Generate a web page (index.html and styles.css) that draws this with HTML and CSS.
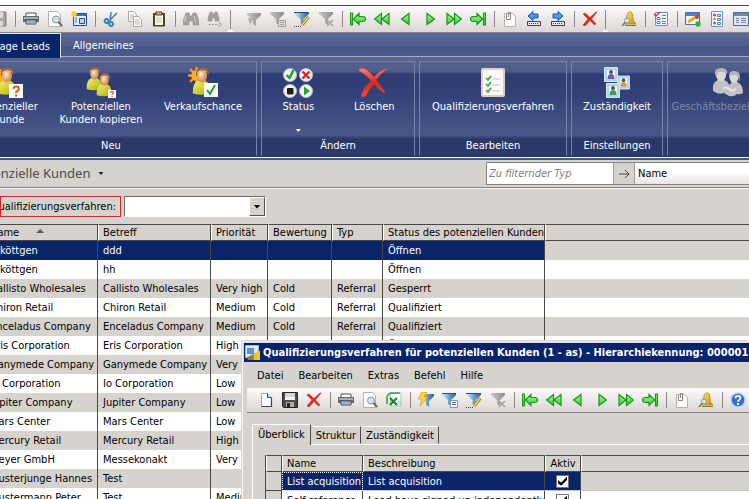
FILE: index.html
```
<!DOCTYPE html>
<html lang="de">
<head>
<meta charset="utf-8">
<title>Potenzielle Kunden</title>
<link rel="stylesheet" href="styles.css">
</head>
<body>
<svg class="defs" aria-hidden="true">
  <defs>
    <linearGradient id="gold" x1="0" y1="0" x2="1" y2="1"><stop offset="0" stop-color="#fff27a"/><stop offset="1" stop-color="#c98a00"/></linearGradient>
    <linearGradient id="leaf" x1="0" y1="0" x2="0" y2="1"><stop offset="0" stop-color="#a8f79c"/><stop offset="1" stop-color="#2fd02a"/></linearGradient>
    <linearGradient id="steel" x1="0" y1="0" x2="1" y2="0"><stop offset="0" stop-color="#dff0fb"/><stop offset=".5" stop-color="#6da3cf"/><stop offset="1" stop-color="#2b5c8c"/></linearGradient>
    <linearGradient id="ash" x1="0" y1="0" x2="1" y2="0"><stop offset="0" stop-color="#c9c7c5"/><stop offset="1" stop-color="#8f8d8b"/></linearGradient>
    <radialGradient id="skin" cx=".4" cy=".4"><stop offset="0" stop-color="#ffe6cc"/><stop offset="1" stop-color="#d9925c"/></radialGradient>
    <linearGradient id="shirt" x1="0" y1="0" x2="1" y2="1"><stop offset="0" stop-color="#f7f26a"/><stop offset="1" stop-color="#a9ae10"/></linearGradient>
    <linearGradient id="ruby" x1="0" y1="0" x2="0" y2="1"><stop offset="0" stop-color="#ff8a78"/><stop offset=".5" stop-color="#e0261b"/><stop offset="1" stop-color="#f04a3c"/></linearGradient>
  </defs>
  <symbol id="i-disk" viewBox="0 0 16 16"><path d="M1 1h14v14H2l-1-1z" fill="#a8a6a4" stroke="#7d7b79"/><path d="M4 1h8v6H4zM4 10h8v5H4z" fill="#dcdad8"/></symbol>
  <symbol id="i-save" viewBox="0 0 16 16"><path d="M.5.5h15v15h-14l-1-1z" fill="#4c4c4c" stroke="#222"/><path d="M3 1h10v7H3z" fill="#f4f4f4"/><path d="M3 2h10M3 4h10" stroke="#b8b8b8"/><path d="M4 10h8v5H4z" fill="#aaa"/><path d="M5 11h3v4H5z" fill="#222"/></symbol>
  <symbol id="i-print" viewBox="0 0 16 16"><path d="M3 2h10v4H3z" fill="#fff" stroke="#555"/><path d="M0 5h16v6H0z" fill="#666b70"/><path d="M1 6h14v2H1z" fill="#a9aeb3"/><path d="M3 9h10v4H3z" fill="#dceaf8" stroke="#444"/><path d="M4 11h8" stroke="#3c78b4"/></symbol>
  <symbol id="i-preview" viewBox="0 0 16 16"><path d="M1.500.500h9l3 3v12h-12z" fill="#fff" stroke="#b5b2af"/><circle cx="9" cy="8.500" r="3.500" fill="#cfe4f2" stroke="#8a9096"/><path d="M11.500 11l3.500 4" stroke="#6b6259" stroke-width="2"/></symbol>
  <symbol id="i-window" viewBox="0 0 16 16"><path d="M2.500 2.500h13v12h-13z" fill="#e5effb" stroke="#1e4fa0"/><path d="M3 3h12v2H3z" fill="#3a72cc"/><path d="M4 7h2M4 9h2M4 11h2" stroke="#3a72cc"/><path d="M8.500 7.500h5v5h-5z" fill="#b9d3f2" stroke="#1e4fa0"/><path d="M0 3h6M3 0v6M1 1l4 4M5 1L1 5" stroke="#f3d613" stroke-width="1.500"/></symbol>
  <symbol id="i-cut" viewBox="0 0 16 16"><path d="M7 10L8 1M7 9l7-7" stroke="#5c86a8" stroke-width="1.700"/><circle cx="3.500" cy="10" r="2" fill="none" stroke="#1b86c8" stroke-width="1.800"/><circle cx="8" cy="13" r="2" fill="none" stroke="#1b86c8" stroke-width="1.800"/></symbol>
  <symbol id="i-copy" viewBox="0 0 16 16"><path d="M1.500.500h5l3 3v7h-8z" fill="#fdfdfd" stroke="#aaa7a4"/><path d="M3 4h4M3 6h4M3 8h3" stroke="#bcbab7"/><path d="M6.500 5.500h5l3 3v7h-8z" fill="#fdfdfd" stroke="#aaa7a4"/><path d="M8 9h4M8 11h5M8 13h5" stroke="#bcbab7"/></symbol>
  <symbol id="i-paste" viewBox="0 0 16 16"><path d="M2 2h12v13.500H2z" fill="#4d4226"/><path d="M4 4h8v10H4z" fill="#f7f5ee"/><path d="M5 1h6v3H5z" fill="#c7b789" stroke="#4d4226"/><path d="M5 7h6M5 9h6M5 11h6" stroke="#c8c6c0"/></symbol>
  <symbol id="i-find" viewBox="0 0 16 16"><path d="M3 2h3l1 3h2l1-3h3l3 8v4h-6v-4H6v4H0v-4z" fill="#a3a09d" stroke="#8f8c89" stroke-width=".5"/><path d="M3 5l-1.500 6M11 5l1.500 6" stroke="#d6d3d0"/></symbol>
  <symbol id="i-findnext" viewBox="0 0 16 16"><path d="M3 1h2l1 2h1l1-2h2l2 6v3H8V7H5v3H1V7z" fill="#a3a09d" stroke="#8f8c89" stroke-width=".5"/><path d="M2 13.500h10" stroke="#9a9794" stroke-dasharray="2 1"/><path d="M11.500 11l3 2.500-3 2.500" fill="none" stroke="#9a9794"/></symbol>
  <symbol id="i-funnel-off" viewBox="0 0 16 16"><path d="M1 2h14v2l-5 5v6l-3-2V9L1 4z" fill="url(#ash)"/><path d="M2 7h6l-4 7z" fill="#b3b1ae"/></symbol>
  <symbol id="i-funnel-form-off" viewBox="0 0 16 16"><path d="M0 1h14v2L9 8v6l-3-2V8L0 3z" fill="url(#ash)"/><path d="M8.500 9.500h7v6h-7z" fill="#dddbd8" stroke="#a3a19e"/><path d="M10 11.500h4M10 13.500h4" stroke="#a3a19e"/></symbol>
  <symbol id="i-funnel-x-off" viewBox="0 0 16 16"><path d="M1 1h14v2l-5 5v6l-3-2V8L1 3z" fill="url(#ash)"/><path d="M9 9l6 6M15 9l-6 6" stroke="#a3a19e" stroke-width="1.600"/></symbol>
  <symbol id="i-funnel-pen" viewBox="0 0 16 16"><path d="M0 1h15v2L9.500 8v6l-3-2V8L0 3z" fill="url(#steel)"/><path d="M0 1.500h15" stroke="#294f78"/><path d="M8 14l6.500-8" stroke="#a46b14" stroke-width="3"/><path d="M8 14l6.500-8" stroke="#ffd45b" stroke-width="1.400"/><path d="M0 15.500h7" stroke="#444" stroke-dasharray="1 1"/></symbol>
  <symbol id="i-funnel-form" viewBox="0 0 16 16"><path d="M0 1h14v2L9 8v6l-3-2V8L0 3z" fill="url(#steel)"/><path d="M0 1.500h14" stroke="#294f78"/><path d="M8.500 8.500h7v7h-7z" fill="#fff" stroke="#7f97b5"/><path d="M10 10.500h4M10 12.500h4" stroke="#456fa5"/></symbol>
  <symbol id="i-funnel-flash" viewBox="0 0 16 16"><path d="M2 2h14v2l-5 5v6l-3-2V9L2 4z" fill="url(#steel)"/><path d="M4 0h5L6 5h4l-8 9 2-7H0z" fill="#ffd72e" stroke="#d19800" stroke-width=".7"/></symbol>
  <symbol id="i-first" viewBox="0 0 16 16"><path d="M.500 2h2v12h-2zM3.500 8L9 2.500v3h3.500q3 0 3 2.500t-3 2.500H9v3z" fill="url(#leaf)" stroke="#18961a" stroke-width="1.200"/></symbol>
  <symbol id="i-back2" viewBox="0 0 16 16"><path d="M.700 8L7.500 2.500v11zM8 8l7-5.500v11z" fill="url(#leaf)" stroke="#18961a" stroke-width="1.200"/></symbol>
  <symbol id="i-back" viewBox="0 0 16 16"><path d="M3.500 8l7.500-5.500v11z" fill="url(#leaf)" stroke="#18961a" stroke-width="1.200"/></symbol>
  <symbol id="i-next" viewBox="0 0 16 16"><path d="M12.500 8L5 2.500v11z" fill="url(#leaf)" stroke="#18961a" stroke-width="1.200"/></symbol>
  <symbol id="i-next2" viewBox="0 0 16 16"><path d="M8 8L1 2.500v11zM15.300 8L8.500 2.500v11z" fill="url(#leaf)" stroke="#18961a" stroke-width="1.200"/></symbol>
  <symbol id="i-last" viewBox="0 0 16 16"><path d="M15.500 2h-2v12h2zM12.500 8L7 2.500v3H3.500q-3 0-3 2.500t3 2.500H7v3z" fill="url(#leaf)" stroke="#18961a" stroke-width="1.200"/></symbol>
  <symbol id="i-clip" viewBox="0 0 16 16"><path d="M2.500 2.500h8l3 3v10h-11z" fill="#fbfbfb" stroke="#b5b2af"/><path d="M4.500 3v5.500h4V1.500h-2V6" fill="none" stroke="#8a8784"/></symbol>
  <symbol id="i-in" viewBox="0 0 16 16"><path d="M2 5l5-4.500V3h5v4H7v2.500z" fill="#4d9ae8" stroke="#1a56a5"/><path d="M1.500 10.500h13v4h-13z" fill="#e6e9ec" stroke="#39444f"/><path d="M3 12.500h10" stroke="#39444f" stroke-dasharray="1 1"/></symbol>
  <symbol id="i-out" viewBox="0 0 16 16"><path d="M13 5L8 .500V3H3v4h5v2.500z" fill="#4d9ae8" stroke="#1a56a5"/><path d="M1.500 10.500h13v4h-13z" fill="#e6e9ec" stroke="#39444f"/><path d="M3 12.500h10" stroke="#39444f" stroke-dasharray="1 1"/></symbol>
  <symbol id="i-del" viewBox="0 0 16 16"><path d="M1 3l2-1 5 4.500L14 1h1L9.500 8l4.500 5-1.500 1L8 9.500 3 15l-2-1 5-6z" fill="#df2c1e" stroke="#b01a10" stroke-width=".5"/></symbol>
  <symbol id="i-bell" viewBox="0 0 16 16"><path d="M8 1q3-1 3.500 3l1 6 2.500 3H3l2-3 1-6q.500-2 2-3z" fill="url(#gold)" stroke="#b08a18" stroke-width=".8"/><path d="M4 14.500h11" stroke="#8c6f28"/><circle cx="6" cy="9.500" r="2.500" fill="#e4f1fa" fill-opacity=".8" stroke="#8c989f"/><path d="M4 11.500l-3 3.500" stroke="#77706a" stroke-width="1.300"/></symbol>
  <symbol id="i-list" viewBox="0 0 16 16"><path d="M2.500 1.500h12v13h-12z" fill="#f5f9ff" stroke="#6f94c4"/><path d="M9 4.500h4M9 7.500h4M9 10.500h4M9 12.500h4" stroke="#5b7fb4"/><path d="M1 3l2 2 4-4" fill="none" stroke="#c33a32" stroke-width="1.400"/><path d="M4 6.500h3v2H4zM4 10.500h3v2H4z" fill="#fff" stroke="#5b7fb4"/></symbol>
  <symbol id="i-design" viewBox="0 0 16 16"><path d="M.500 1.500h14v12H.500z" fill="#eef5ff" stroke="#3f6fb5"/><path d="M1 2h13v3H1z" fill="#4d82cc"/><path d="M3 11l8-5" stroke="#e5ad18" stroke-width="3"/><circle cx="13" cy="13" r="2.700" fill="#2fb13a"/><circle cx="12" cy="6" r="2" fill="#d83a30"/></symbol>
  <symbol id="i-props" viewBox="0 0 16 16"><path d="M2.500.500h11v15h-11z" fill="#f7faff" stroke="#7390bd"/><circle cx="5.500" cy="4" r="1.500" fill="#d5443a"/><circle cx="5.500" cy="8" r="1.500" fill="#e39922"/><circle cx="5.500" cy="12" r="1.500" fill="#4774c2"/><path d="M8.500 3.500h3v2h-3zM8.500 7.500h3v2h-3zM8.500 11.500h3v2h-3z" fill="#cfe0f5" stroke="#5b7fb4"/></symbol>
  <symbol id="i-form" viewBox="0 0 16 16"><path d="M.500 1.500h15v13H.500z" fill="#dfe9f6" stroke="#4b6c9c"/><path d="M1 2h14v3H1z" fill="#6787b4"/><path d="M3 7.500h3M3 9.500h3M3 11.500h3M8 7.500h5M8 9.500h5M8 11.500h5" stroke="#6787b4"/></symbol>
  <symbol id="i-new" viewBox="0 0 16 16"><path d="M3.500 1.500h6l4 4v9h-10z" fill="#fff" stroke="#8fa6cf"/><path d="M9.500 1.500v4h4" fill="#bcd0ec" stroke="#32568f"/><path d="M13.500 6v8.500h-10" fill="none" stroke="#24457c" stroke-width="1.200"/></symbol>
  <symbol id="i-excel" viewBox="0 0 16 16"><path d="M4 1h11v13H5z" fill="#fff" stroke="#9ccaa5"/><path d="M1 12V6q0-5 6-5h7" fill="none" stroke="#35a349" stroke-width="1.600"/><path d="M4 6l7 7M11 6l-7 7" stroke="#17802b" stroke-width="2"/><path d="M11 10h4M11 12h4" stroke="#9ccaa5"/></symbol>
  <symbol id="i-help" viewBox="0 0 16 16"><circle cx="8" cy="8" r="7" fill="#2f70d2" stroke="#bcd3f2" stroke-width="1.500"/><path d="M5.500 6.200q0-2.400 2.500-2.400t2.500 2.200q0 1-1.300 1.700T8 9.700" fill="none" stroke="#fff" stroke-width="1.700"/><path d="M7 11h2v2H7z" fill="#fff"/></symbol>
  <symbol id="i-app" viewBox="0 0 16 16"><path d="M.500.500h13v12H.500z" fill="#d9ecf9" stroke="#a8b8c8"/><path d="M2 3h7v6H2z" fill="#5a92cf"/><path d="M6 15v-5l3-1v6z" fill="#4dac46"/><path d="M9 15V8l3-1v8z" fill="#f2c12c"/><path d="M12 15V5l3 1v9z" fill="#d9d04a"/><path d="M2 13l4-3v5H3z" fill="#d35b2e"/></symbol>
  <symbol id="i-person" viewBox="0 0 20 28"><path d="M1 26q-1-10 5-13h7q6 3 5 12-6 4-17 1z" fill="url(#shirt)"/><ellipse cx="10" cy="8" rx="5" ry="7" fill="url(#skin)"/><path d="M4 8Q3 1 10 0q7 0 7 7-4-4-9-3-3 1-3 5z" fill="#a4653a"/><path d="M5 5q4-3 9-1" stroke="#f1d3b8" fill="none"/></symbol>
  <symbol id="i-sun" viewBox="0 0 16 16"><path d="M8 0v16M0 8h16M2 2l12 12M14 2L2 14" stroke="#f79c14" stroke-width="2.200"/><circle cx="8" cy="8" r="5" fill="#ffae24"/></symbol>
  <symbol id="r-lead" viewBox="0 0 34 34"><use href="#i-sun" x="0" y="3" width="17" height="17"/><use href="#i-person" x="5" y="1" width="20" height="29"/><path d="M17 18h14v14H17z" fill="#fff"/><path d="M21.500 23q0-2.600 2.700-2.600T26.800 23q0 1.300-1.400 2t-1.300 2" fill="none" stroke="#e0561e" stroke-width="2"/><path d="M23 28.500h2.200v2H23z" fill="#e0561e"/></symbol>
  <symbol id="r-copy" viewBox="0 0 34 34"><use href="#i-person" x="2" y="1" width="17" height="24"/><use href="#i-person" x="12" y="7" width="17" height="24"/><path d="M24 24h8v8h-8z" fill="#fff"/><path d="M26.500 26.700q0-1.300 1.500-1.300t1.500 1.200q0 .700-.8 1.200t-.7 1" fill="none" stroke="#e0561e" stroke-width="1.200"/><path d="M27.500 30h1.200v1h-1.200z" fill="#e0561e"/></symbol>
  <symbol id="r-sales" viewBox="0 0 34 34"><use href="#i-sun" x="2" y="1" width="17" height="17"/><use href="#i-person" x="6" y="1" width="20" height="29"/><path d="M18 17h14v14H18z" fill="#fff"/><path d="M21 24l3 4 5-9" fill="none" stroke="#22a12a" stroke-width="2"/></symbol>
  <symbol id="r-status" viewBox="0 0 34 34"><g fill="#f1f1f1" stroke="#b9bcc4"><circle cx="9" cy="9" r="6.500"/><circle cx="25" cy="9" r="6.500"/><circle cx="9" cy="25" r="6.500"/><circle cx="25" cy="25" r="6.500"/></g><path d="M5.500 9l3 3 4-8" fill="none" stroke="#1fa02a" stroke-width="2.400"/><path d="M21.500 5.500l7 7M28.500 5.500l-7 7" stroke="#d7281d" stroke-width="2.400"/><rect x="6" y="22" width="6.500" height="6.500" rx="1" fill="#1d1d1d"/><path d="M23 20.500l6 4.500-6 4.500z" fill="#2aa32a"/></symbol>
  <symbol id="r-del" viewBox="0 0 34 34"><path d="M2 3q5-2 8 1 4 3 7 7 6-7 14-9Q24 7 19 14q5 6 9 12l-1 1q-6-4-10-9-5 5-8 12-3 2-5 0 2-8 10-15Q9 8 2 5z" fill="url(#ruby)" stroke="#c3392e" stroke-width=".5"/></symbol>
  <symbol id="r-quali" viewBox="0 0 34 34"><rect x="6" y="3" width="22" height="27" rx="1" fill="#fbfaf6" stroke="#e2cdbf" stroke-width="2"/><path d="M10 12l2 2 3-4M10 18l2 2 3-4M10 24l2 2 3-4" fill="none" stroke="#34a53c" stroke-width="1.600"/><path d="M17 13h7M17 19h7M17 25h7" stroke="#c2c2c2"/></symbol>
  <symbol id="i-card" viewBox="0 0 14 15"><path d="M.5.5h13v14H.5z" fill="#a9d4f2" stroke="#d5ecfb"/><path d="M3 3h8v9H3z" fill="#f3fbff"/><circle cx="7" cy="5" r="2" fill="#734a34"/><path d="M3.500 12q0-5 3.500-5t3.500 5z"/></symbol>
  <symbol id="r-own" viewBox="0 0 34 34"><g fill="#6a5bb0"><use href="#i-card" x="4" y="1" width="14" height="15"/></g><g fill="#cf9a3a"><use href="#i-card" x="17" y="9" width="13" height="15"/></g><g fill="#3c9c4e"><use href="#i-card" x="6" y="17" width="14" height="15"/></g></symbol>
  <symbol id="r-rel" viewBox="0 0 34 34"><path d="M2 25q-1-9 5-11h6q4 1 5 5l3-3h5q6 2 6 11-3 2-6 1-3 3-8 2l-5-3q-6 2-11-2z" fill="#c2c2c4"/><ellipse cx="10" cy="9" rx="5" ry="6.500" fill="#d9d9da"/><path d="M4 9q-1-7 6-7t6 6q-5-3-8-2-2 0-2 5z" fill="#b4b4b8"/><ellipse cx="23" cy="11" rx="4.500" ry="6" fill="#d9d9da"/><path d="M18 11q-1-6 5-6t6 6l-1 5q0-7-4-7-4-1-6 2z" fill="#b4b4b8"/><path d="M12 23q3-3 6 0t7 0" stroke="#e6e6e7" stroke-width="2" fill="none"/></symbol>
</svg>

<div class="app">
  <nav class="toolbar toolbar-main" aria-label="Symbolleiste">
    <button><svg><use href="#i-disk"/></svg></button><i class="sep"></i>
    <button><svg><use href="#i-print"/></svg></button><button><svg><use href="#i-preview"/></svg></button><button><svg><use href="#i-window"/></svg></button><i class="sep"></i>
    <button><svg><use href="#i-cut"/></svg></button><button><svg><use href="#i-copy"/></svg></button><button><svg><use href="#i-paste"/></svg></button><i class="sep"></i>
    <button><svg><use href="#i-find"/></svg></button><button><svg><use href="#i-findnext"/></svg></button><i class="sep sep-end"></i>
    <button><svg><use href="#i-funnel-off"/></svg></button><button><svg><use href="#i-funnel-form-off"/></svg></button><button><svg><use href="#i-funnel-pen"/></svg></button><button><svg><use href="#i-funnel-x-off"/></svg></button><i class="sep"></i>
    <button><svg><use href="#i-first"/></svg></button><button><svg><use href="#i-back2"/></svg></button><button><svg><use href="#i-back"/></svg></button><button><svg><use href="#i-next"/></svg></button><button><svg><use href="#i-next2"/></svg></button><button><svg><use href="#i-last"/></svg></button><i class="sep"></i>
    <button><svg><use href="#i-clip"/></svg></button><button><svg><use href="#i-in"/></svg></button><button><svg><use href="#i-out"/></svg></button><i class="sep"></i>
    <button><svg><use href="#i-del"/></svg></button><i class="sep sep-end"></i>
    <button><svg><use href="#i-bell"/></svg></button><i class="sep"></i>
    <button><svg><use href="#i-list"/></svg></button><i class="sep"></i>
    <button><svg><use href="#i-design"/></svg></button><button><svg><use href="#i-props"/></svg></button><button><svg><use href="#i-form"/></svg></button>
  </nav>

  <div class="ribbon-tabs">
    <button class="ribbon-tab active">Manage Leads</button>
    <button class="ribbon-tab">Allgemeines</button>
  </div>

  <div class="ribbon">
    <section class="group group-new">
      <div class="actions">
        <button class="action"><svg><use href="#r-lead"/></svg>Potenzieller<br>Kunde</button>
        <button class="action"><svg><use href="#r-copy"/></svg>Potenziellen<br>Kunden kopieren</button>
        <button class="action"><svg><use href="#r-sales"/></svg>Verkaufschance</button>
      </div>
      <h2>Neu</h2>
    </section>
    <section class="group group-change">
      <div class="actions">
        <button class="action"><svg><use href="#r-status"/></svg>Status<span class="caret"></span></button>
        <button class="action"><svg><use href="#r-del"/></svg>Löschen</button>
      </div>
      <h2>Ändern</h2>
    </section>
    <section class="group group-edit">
      <div class="actions"><button class="action"><svg><use href="#r-quali"/></svg>Qualifizierungsverfahren</button></div>
      <h2>Bearbeiten</h2>
    </section>
    <section class="group group-settings">
      <div class="actions"><button class="action"><svg><use href="#r-own"/></svg>Zuständigkeit</button></div>
      <h2>Einstellungen</h2>
    </section>
    <section class="group group-relations">
      <div class="actions"><button class="action" disabled><svg><use href="#r-rel"/></svg>Geschäftsbeziehungen</button></div>
    </section>
  </div>

  <header class="viewbar">
    <button class="view-title">Potenzielle Kunden<span class="caret"></span></button>
    <div class="search">
      <input type="text" placeholder="Zu filternder Typ" aria-label="Zu filternder Typ">
      <button class="go" aria-label="Suchen"><svg viewBox="0 0 12 12"><path d="M1 6h10M7 2l4 4-4 4" fill="none" stroke="#444"/></svg></button>
      <select aria-label="Feld"><option>Name</option></select>
    </div>
  </header>

  <div class="filterbar">
    <label for="procedure">Qualifizierungsverfahren:</label>
    <div class="combo">
      <select id="procedure"><option></option></select>
      <span class="drop"></span>
    </div>
  </div>

  <table class="grid leads">
    <colgroup><col class="c-name"><col class="c-subject"><col class="c-priority"><col class="c-rating"><col class="c-type"><col class="c-status"><col></colgroup>
    <thead><tr><th>Name<span class="sort"></span></th><th>Betreff</th><th>Priorität</th><th>Bewertung</th><th>Typ</th><th>Status des potenziellen Kunden</th><th></th></tr></thead>
    <tbody>
      <tr class="selected"><td class="indent">köttgen</td><td>ddd</td><td></td><td></td><td></td><td>Öffnen</td><td></td></tr>
      <tr><td class="indent">köttgen</td><td>hh</td><td></td><td></td><td></td><td>Öffnen</td><td></td></tr>
      <tr><td>Callisto Wholesales</td><td>Callisto Wholesales</td><td>Very high</td><td>Cold</td><td>Referral</td><td>Gesperrt</td><td></td></tr>
      <tr><td>Chiron Retail</td><td>Chiron Retail</td><td>Medium</td><td>Cold</td><td>Referral</td><td>Qualifiziert</td><td></td></tr>
      <tr><td>Enceladus Company</td><td>Enceladus Company</td><td>Medium</td><td>Cold</td><td>Referral</td><td>Qualifiziert</td><td></td></tr>
      <tr><td>Eris Corporation</td><td>Eris Corporation</td><td>High</td><td></td><td></td><td>Öffnen</td><td></td></tr>
      <tr><td>Ganymede Company</td><td>Ganymede Company</td><td>Very</td><td></td><td></td><td></td><td></td></tr>
      <tr><td>Io Corporation</td><td>Io Corporation</td><td>Low</td><td></td><td></td><td></td><td></td></tr>
      <tr><td>Jupiter Company</td><td>Jupiter Company</td><td>Low</td><td></td><td></td><td></td><td></td></tr>
      <tr><td>Mars Center</td><td>Mars Center</td><td>Low</td><td></td><td></td><td></td><td></td></tr>
      <tr><td>Mercury Retail</td><td>Mercury Retail</td><td>High</td><td></td><td></td><td></td><td></td></tr>
      <tr><td>Meyer GmbH</td><td>Messekonakt</td><td>Very</td><td></td><td></td><td></td><td></td></tr>
      <tr><td>Musterjunge Hannes</td><td>Test</td><td></td><td></td><td></td><td></td><td></td></tr>
      <tr><td>Mustermann Peter</td><td>Test</td><td>Medium</td><td></td><td></td><td></td><td></td></tr>
    </tbody>
  </table>

  <section class="dialog" role="dialog" aria-labelledby="dlg-title">
    <header class="titlebar"><svg><use href="#i-app"/></svg><h1 id="dlg-title">Qualifizierungsverfahren für potenziellen Kunden (1 - as) - Hierarchiekennung: 000001</h1></header>
    <nav class="menubar"><button>Datei</button><button>Bearbeiten</button><button>Extras</button><button>Befehl</button><button>Hilfe</button></nav>
    <nav class="toolbar toolbar-dialog" aria-label="Dialog-Symbolleiste">
      <button><svg><use href="#i-new"/></svg></button><button><svg><use href="#i-save"/></svg></button><button><svg><use href="#i-del"/></svg></button><i class="sep"></i>
      <button><svg><use href="#i-print"/></svg></button><button><svg><use href="#i-preview"/></svg></button><button><svg><use href="#i-excel"/></svg></button><i class="sep"></i>
      <button><svg><use href="#i-funnel-flash"/></svg></button><button><svg><use href="#i-funnel-form"/></svg></button><button><svg><use href="#i-funnel-pen"/></svg></button><button><svg><use href="#i-funnel-x-off"/></svg></button><i class="sep"></i>
      <button><svg><use href="#i-first"/></svg></button><button><svg><use href="#i-back2"/></svg></button><button><svg><use href="#i-back"/></svg></button><button><svg><use href="#i-next"/></svg></button><button><svg><use href="#i-next2"/></svg></button><button><svg><use href="#i-last"/></svg></button><i class="sep"></i>
      <button><svg><use href="#i-clip"/></svg></button><button><svg><use href="#i-bell"/></svg></button><i class="sep"></i>
      <button><svg><use href="#i-help"/></svg></button>
    </nav>
    <div class="tabs"><button class="tab active">Überblick</button><button class="tab">Struktur</button><button class="tab">Zuständigkeit</button></div>
    <div class="page">
      <table class="grid procedures">
        <colgroup><col class="c-mark"><col class="c-pname"><col class="c-desc"><col class="c-active"><col></colgroup>
        <thead><tr><th></th><th>Name</th><th>Beschreibung</th><th>Aktiv</th><th></th></tr></thead>
        <tbody>
          <tr class="selected"><td class="mark"></td><td class="focus">List acquisition</td><td>List acquisition</td><td class="check"><input type="checkbox" checked aria-label="Aktiv"></td><td></td></tr>
          <tr class="plain"><td class="mark"></td><td>Self reference</td><td>Lead have signed up independently</td><td class="check"><input type="checkbox" checked aria-label="Aktiv"></td><td></td></tr>
        </tbody>
      </table>
    </div>
  </section>
</div>
</body>
</html>
```

FILE: styles.css
```
* { box-sizing: border-box; }
:root {
  --face: #d6d3ce;
  --navy: #0a246a;
  --font: "DejaVu Sans Condensed", "DejaVu Sans", sans-serif;
}
body { margin: 0; font: 11px/13px var(--font); color: #000; background: #fff; }
button, input, select { font: inherit; color: inherit; border: 0; padding: 0; margin: 0; background: none; border-radius: 0; }
.defs { position: absolute; width: 0; height: 0; }
.app { position: relative; height: 100vh; padding-top: 5px; overflow: hidden; }

/* Toolbars */
.toolbar { display: flex; align-items: center; background: linear-gradient(#fbfafa, #dcd6d4); }
.toolbar button { flex: none; width: 24px; height: 24px; display: grid; place-items: center; }
.toolbar svg { width: 16px; height: 16px; display: block; }
.toolbar-main { height: 28px; margin-left: -13px; border-top: 1px solid #4c4c4c; border-bottom: 1px solid #85858c; }
.sep { flex: none; width: 8px; height: 16px; background: linear-gradient(#8c8884, #8c8884) 4px 0 / 1px 100% no-repeat; }
.sep-end { width: 15px; height: 22px; align-self: flex-end; background-position: 3px 0; }
.sep-end::after { content: ""; display: block; width: 7px; height: 3px; margin-top: 19px; background: #fff; clip-path: polygon(50% 0, 100% 100%, 0 100%); }

/* Ribbon */
.ribbon-tabs { display: flex; height: 23px; background: linear-gradient(#59689a, #515e8d 55%, #46548a 60%, #4d5a8c); color: #fff; }
.ribbon-tab { height: 25px; padding: 0 12px; white-space: nowrap; }
.ribbon-tab.active { width: 97px; margin-left: -36px; padding: 0 10px 0 0; text-align: right; background: var(--navy); border: 1px solid #dfe3f0; border-bottom: 0; position: relative; }
.ribbon { display: flex; gap: 4px; height: 102px; margin-left: -35px; padding: 4px 0 1px; color: #fff; border-top: 1px solid #a4abc8; border-bottom: 1px solid #f4f5f8; background: linear-gradient(#5a6792, #4d5b8a 15px, #2d3c73 17px, #33437a 40px, #4a5788 78px, #2a3868 82px, #2b3a6c); }
.group { flex: none; display: flex; flex-direction: column; justify-content: space-between; border: 1px solid #7582aa; border-bottom-color: #28366a; }
.group-new { width: 292px; }
.group-change { width: 154px; }
.group-edit { width: 148px; }
.group-settings { width: 92px; }
.group-relations { flex: 1; }
.group h2 { margin: 0; font-size: 11px; font-weight: normal; line-height: 18px; text-align: center; }
.actions { display: grid; grid-auto-flow: column; align-items: start; padding-top: 4px; }
.group-new .actions { grid-template-columns: 86px 98px 1fr; }
.group-relations .actions { grid-template-columns: 120px; }
.action { text-align: center; white-space: nowrap; }
.action svg { display: block; width: 34px; height: 34px; margin: 0 auto; }
.action:disabled { color: #8088a4; }
.caret { display: block; width: 5px; height: 3px; background: currentColor; clip-path: polygon(0 0, 100% 0, 50% 100%); }
.action .caret { margin: 16px auto 0; }

/* View title and quick search */
.viewbar { display: flex; justify-content: space-between; align-items: center; height: 30px; border-top: 2px solid #47598c; border-bottom: 1px solid #85827e; background: var(--face); }
.view-title { display: flex; align-items: center; gap: 8px; margin-left: -27px; font-family: "Noto Sans", sans-serif; font-size: 13px; color: #4c4c4c; white-space: nowrap; }
.view-title .caret { color: #222; }
.search { display: flex; width: 263px; height: 23px; border: 1px solid #85827e; border-right: 0; }
.search input { width: 126px; padding: 0 2px; background: #fff; }
.search input::placeholder { color: #808080; font-style: italic; opacity: 1; }
.go { width: 22px; border: solid #a3a09c; border-width: 0 1px; display: grid; place-items: center; }
.go svg { width: 12px; height: 12px; }
.search select { flex: 1; padding: 0 3px; appearance: none; background: linear-gradient(#fff 40%, #ebe3e3); }

/* Filter */
.filterbar { display: flex; align-items: center; gap: 3px; height: 36px; border-top: 1px solid #f6f5f3; background: var(--face); }
.filterbar label { width: 121px; height: 21px; padding-right: 4px; line-height: 19px; border: 1px solid #cf2a2a; display: flex; justify-content: flex-end; overflow: hidden; }
.combo { display: flex; width: 142px; height: 21px; border: 1px solid; border-color: #6e6b67 #fff #fff #6e6b67; background: #fff; }
.combo select { flex: 1; min-width: 0; appearance: none; }
.drop { width: 16px; display: grid; place-items: center; background: var(--face); border: 1px solid; border-color: #fff #55524e #55524e #fff; }
.drop::after { content: ""; width: 7px; height: 4px; background: #000; clip-path: polygon(0 0, 100% 0, 50% 100%); }

/* Grids */
.grid { table-layout: fixed; border-collapse: separate; border-spacing: 0; }
.grid th { height: 17px; padding: 0 4px; text-align: left; font-weight: normal; white-space: nowrap; background: var(--face); border: 1px solid; border-color: #4a4844 #4a4844 #4a4844 #fff; }
.grid td { height: 19px; padding: 0 5px; white-space: nowrap; overflow: hidden; border-right: 1px solid #4a4844; }
.grid th:last-child, .grid td:last-child { border-right: 0; }
.grid tr:nth-child(odd) td { background: var(--face); }
.grid tr.selected td:not(:last-child):not(.mark) { background: var(--navy); color: #fff; }
.leads { width: calc(100% + 15px); margin-left: -15px; }
.leads td.indent { padding-left: 15px; }
.sort { display: inline-block; width: 8px; height: 4px; margin-left: 17px; vertical-align: 3px; background: #5e5c58; clip-path: polygon(50% 0, 100% 100%, 0 100%); }
.c-name { width: 113px; }
.c-subject { width: 113px; }
.c-priority { width: 57px; }
.c-rating { width: 64px; }
.c-type { width: 51px; }
.c-status { width: 162px; }

/* Dialog window */
.dialog { position: absolute; left: 242px; top: 341px; right: 0; padding: 1px 0 0 1px; background: var(--face); border: solid #f6f5f3; border-width: 1px 0 0 1px; box-shadow: -1px -1px 0 #d6d3ce; }
.titlebar { display: flex; align-items: center; gap: 2px; height: 19px; padding-left: 1px; background: var(--navy); color: #fff; }
.titlebar svg { flex: none; width: 16px; height: 16px; }
.titlebar h1 { margin: 0; font-size: 11px; white-space: nowrap; }
.menubar { display: flex; gap: 15px; height: 26px; padding-left: 13px; }
.toolbar-dialog { height: 25px; margin-left: 3px; padding-left: 7px; border-bottom: 1px solid #85827e; }
.tabs { display: flex; align-items: flex-end; height: 31px; padding-left: 8px; }
.tab { position: relative; height: 18px; padding: 0 4px; border: 1px solid; border-color: #fff #4a4844 transparent transparent; }
.tab.active { height: 21px; margin-bottom: -1px; padding: 0 5px 2px; background: var(--face); border-left-color: #fff; border-bottom: 0; }
.page { margin-left: 8px; padding: 10px 0 0 12px; border: solid #fff; border-width: 1px 0 0 1px; }
.procedures { width: 100%; border-left: 1px solid #4a4844; }
.procedures td { border-bottom: 1px solid #c8c5c0; }
.procedures tr.plain td:not(.mark) { background: #fff; }
.procedures td.mark { background: var(--face); border-bottom-color: #4a4844; }
.procedures td.focus { outline: 1px dotted #fff; outline-offset: -1px; }
.procedures th:nth-child(4) { text-align: center; }
.procedures td.check { padding: 0; text-align: center; }
.check input { appearance: none; display: inline-block; vertical-align: middle; width: 13px; height: 13px; border: 1px solid #77746f; background: #fff; }
.check input:checked::after { content: ""; display: block; width: 9px; height: 9px; margin: 1px; background: #000; clip-path: polygon(0 40%, 35% 65%, 100% 0, 100% 35%, 35% 100%, 0 72%); }
.c-mark { width: 16px; }
.c-pname { width: 81px; }
.c-desc { width: 182px; }
.c-active { width: 36px; }
```
